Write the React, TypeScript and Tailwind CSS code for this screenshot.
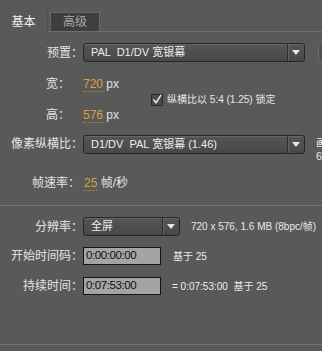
import React from "react";

const font = "font-['Liberation_Sans','Noto_Sans_CJK_SC',sans-serif]";

function Select({ width, text }: { width: string; text: string }) {
  return (
    <div
      className={`${width} h-[19px] flex items-stretch rounded-[3px] border border-[#262626] bg-gradient-to-b from-[#555555] to-[#484848] shadow-[inset_0_1px_0_#666666]`}
    >
      <div className="flex-1 flex items-center pl-[7px] text-[11px] text-[#ececec] whitespace-pre">{text}</div>
      <div className="w-[17px] flex items-center justify-center border-l border-[#2e2e2e] shadow-[inset_1px_0_0_#626262]">
        <svg width="8" height="5" viewBox="0 0 8 5">
          <path d="M0 0h8L4 5z" fill="#e6e6e6" />
        </svg>
      </div>
    </div>
  );
}

function Label({ children, w = "w-[83px]" }: { children: React.ReactNode; w?: string }) {
  return <div className={`${w} shrink-0 text-right text-[12px] text-[#e4e4e4]`}>{children}</div>;
}

function Hot({ children }: { children: React.ReactNode }) {
  return (
    <span className="text-[#d4a43a] border-b border-dotted border-[#b08a35] leading-[13px]">{children}</span>
  );
}

function TimeBox({ value }: { value: string }) {
  return (
    <div className="w-[78px] h-[18px] flex items-center bg-[#a4a4a4] border border-[#151515] pl-[2px] text-[11.5px] tracking-[-0.4px] text-[#111111]">
      {value}
    </div>
  );
}

export default function App() {
  return (
    <div className={`w-[322px] h-[351px] overflow-hidden bg-[#595959] flex flex-col ${font}`}>
      {/* tabs */}
      <div className="h-[32px] flex items-end shrink-0">
        <div className="w-[48px] h-[20px] flex items-center justify-center text-[12px] text-[#f2f2f2] border-r border-[#4e4e4e]">
          基本
        </div>
        <div className="flex-1 h-[20px] flex items-start border-b border-[#6e6e6e]">
          <div className="ml-[2px] w-[50px] h-[19px] flex items-center justify-center bg-[#3e3e3e] border border-[#686868] border-b-0 text-[12px] text-[#a8a8a8]">
            高级
          </div>
        </div>
      </div>

      {/* 预置 */}
      <div className="mt-[11px] flex items-center shrink-0">
        <Label>预置：</Label>
        <Select width="w-[222px] shrink-0" text="PAL  D1/DV 宽银幕" />
        <div className="ml-[13px] w-[20px] h-[19px] shrink-0 rounded-[3px] border border-[#6a6a6a] bg-[#505050]" />
      </div>

      {/* 宽 / 高 */}
      <div className="mt-[13px] flex items-center shrink-0">
        <div className="flex flex-col gap-[13px]">
          <div className="h-[18px] flex items-center">
            <Label w="w-[70px]">宽：</Label>
            <div className="ml-[13px] text-[12px] text-[#e4e4e4]">
              <Hot>720</Hot> px
            </div>
          </div>
          <div className="h-[18px] flex items-center">
            <Label w="w-[70px]">高：</Label>
            <div className="ml-[13px] text-[12px] text-[#e4e4e4]">
              <Hot>576</Hot> px
            </div>
          </div>
        </div>
        <div className="ml-[32px] flex items-center gap-[4px]">
          <div className="w-[12px] h-[12px] border border-[#2a2a2a] bg-[#4a4a4a] flex items-center justify-center">
            <svg width="11" height="11" viewBox="0 0 11 11">
              <path d="M1.5 5.5l3 3.5L10 0.5" stroke="#efefef" strokeWidth="1.6" fill="none" />
            </svg>
          </div>
          <span className="text-[10px] text-[#e8e8e8]">纵横比以 5:4 (1.25) 锁定</span>
        </div>
      </div>

      {/* 像素纵横比 */}
      <div className="mt-[11px] h-[19px] flex items-start shrink-0">
        <Label w="w-[83px] leading-[19px]">像素纵横比：</Label>
        <Select width="w-[222px] shrink-0" text="D1/DV  PAL 宽银幕 (1.46)" />
        <div className="ml-[11px] mt-[2px] flex flex-col text-[11px] leading-[13px] text-[#e8e8e8] shrink-0">
          <span>画面</span>
          <span>6</span>
        </div>
      </div>

      {/* 帧速率 */}
      <div className="mt-[20px] h-[18px] flex items-center shrink-0">
        <Label w="w-[80px]">帧速率：</Label>
        <div className="ml-[4px] text-[12px] text-[#e4e4e4]">
          <Hot>25</Hot> 帧/秒
        </div>
      </div>

      <div className="mt-[13px] h-px bg-[#747474] shrink-0" />

      {/* 分辨率 */}
      <div className="mt-[11px] flex items-center shrink-0">
        <Label>分辨率：</Label>
        <Select width="w-[97px] shrink-0" text="全屏" />
        <span className="ml-[11px] text-[10px] text-[#e8e8e8] whitespace-nowrap">720 x 576, 1.6 MB (8bpc/帧)</span>
      </div>

      {/* 开始时间码 */}
      <div className="mt-[11px] flex items-center shrink-0">
        <Label>开始时间码：</Label>
        <TimeBox value="0:00:00:00" />
        <span className="ml-[12px] text-[10px] text-[#ececec]">基于 25</span>
      </div>

      {/* 持续时间 */}
      <div className="mt-[12px] flex items-center shrink-0">
        <Label>持续时间：</Label>
        <TimeBox value="0:07:53:00" />
        <span className="ml-[11px] text-[10px] text-[#ececec] whitespace-pre">= 0:07:53:00  基于 25</span>
      </div>

      <div className="mt-auto h-px bg-[#727272] shrink-0" />
      <div className="h-[6px] shrink-0" />
    </div>
  );
}
